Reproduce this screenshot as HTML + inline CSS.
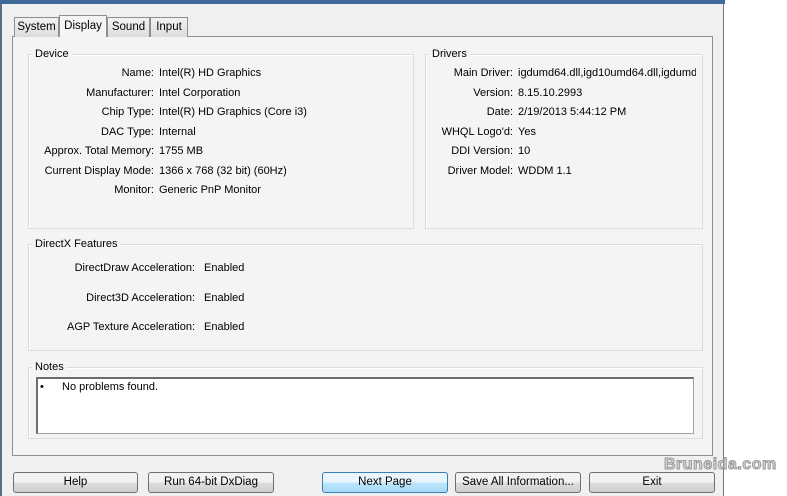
<!DOCTYPE html>
<html><head><style>
body{margin:0;width:787px;height:496px;background:#fff;position:relative;overflow:hidden;font-family:"Liberation Sans",sans-serif;font-size:11px;color:#000}
.a{position:absolute}
.win{left:0;top:0;width:724px;height:496px;background:#f0f0f0;border-left:2px solid #5a6e86;border-right:1px solid #6a7c92;box-sizing:border-box}
.top{left:0;top:0;width:725px;height:4px;background:#3f6a9a}
.panel{left:12px;top:36px;width:701px;height:420px;border:1px solid #8e8f8f;background:#f4f4f4;box-sizing:border-box}
.tab{top:17px;height:20px;border:1px solid #8e8f8f;border-bottom:none;background:linear-gradient(#f2f2f2,#dcdcdc);box-sizing:border-box;text-align:center;line-height:19px;font-size:11.5px}
.tab.sel{top:15px;height:22px;background:#f4f4f4;line-height:20px}
.grp{border:1px solid #dcdcdc;box-shadow:inset 1px 1px 0 #fff;box-sizing:border-box;background:#f4f4f4}
.lg{background:#f4f4f4;padding:0 3px}
.r{text-align:right;width:250px}
.btn{top:472px;height:21px;border:1px solid #707070;border-radius:3px;background:linear-gradient(#f2f2f2 50%,#dddddd 50%,#cfcfcf);box-sizing:border-box;text-align:center;line-height:19px;font-size:11.5px}
</style></head><body>
<div class="a win"></div>
<div class="a top"></div>
<div class="a panel"></div>
<div class="a tab" style="left:14px;width:45px">System</div>
<div class="a tab" style="left:107px;width:43px">Sound</div>
<div class="a tab" style="left:150px;width:38px">Input</div>
<div class="a tab sel" style="left:59px;width:48px">Display</div>

<div class="a grp" style="left:28px;top:54px;width:386px;height:175px"></div>
<div class="a lg" style="left:32px;top:48px">Device</div>
<div class="a grp" style="left:425px;top:54px;width:278px;height:175px"></div>
<div class="a lg" style="left:429px;top:48px">Drivers</div>
<div class="a grp" style="left:28px;top:244px;width:675px;height:107px"></div>
<div class="a lg" style="left:32px;top:238px">DirectX Features</div>
<div class="a grp" style="left:28px;top:367px;width:675px;height:72px"></div>
<div class="a lg" style="left:32px;top:361px">Notes</div>
<div class="a" style="left:36px;top:377px;width:658px;height:57px;background:#fff;border:1px solid #a0a0a0;border-top:2px solid #6d6d6d;border-left:2px solid #6d6d6d;box-sizing:border-box"></div>
<div class="a" style="left:40px;top:381px">•</div>
<div class="a" style="left:62px;top:381px">No problems found.</div>

<div class="a r" style="left:-96px;top:67px">Name:</div><div class="a" style="left:159px;top:67px">Intel(R) HD Graphics</div>
<div class="a r" style="left:-96px;top:87px">Manufacturer:</div><div class="a" style="left:159px;top:87px">Intel Corporation</div>
<div class="a r" style="left:-96px;top:106px">Chip Type:</div><div class="a" style="left:159px;top:106px">Intel(R) HD Graphics (Core i3)</div>
<div class="a r" style="left:-96px;top:126px">DAC Type:</div><div class="a" style="left:159px;top:126px">Internal</div>
<div class="a r" style="left:-96px;top:145px">Approx. Total Memory:</div><div class="a" style="left:159px;top:145px">1755 MB</div>
<div class="a r" style="left:-96px;top:165px">Current Display Mode:</div><div class="a" style="left:159px;top:165px">1366 x 768 (32 bit) (60Hz)</div>
<div class="a r" style="left:-96px;top:184px">Monitor:</div><div class="a" style="left:159px;top:184px">Generic PnP Monitor</div>

<div class="a r" style="left:263px;top:67px">Main Driver:</div><div class="a" style="left:518px;top:67px;width:178px;overflow:hidden;white-space:nowrap">igdumd64.dll,igd10umd64.dll,igdumdx</div>
<div class="a r" style="left:263px;top:87px">Version:</div><div class="a" style="left:518px;top:87px">8.15.10.2993</div>
<div class="a r" style="left:263px;top:106px">Date:</div><div class="a" style="left:518px;top:106px">2/19/2013 5:44:12 PM</div>
<div class="a r" style="left:263px;top:126px">WHQL Logo'd:</div><div class="a" style="left:518px;top:126px">Yes</div>
<div class="a r" style="left:263px;top:145px">DDI Version:</div><div class="a" style="left:518px;top:145px">10</div>
<div class="a r" style="left:263px;top:165px">Driver Model:</div><div class="a" style="left:518px;top:165px">WDDM 1.1</div>

<div class="a r" style="left:-55px;top:262px">DirectDraw Acceleration:</div><div class="a" style="left:204px;top:262px">Enabled</div>
<div class="a r" style="left:-55px;top:292px">Direct3D Acceleration:</div><div class="a" style="left:204px;top:292px">Enabled</div>
<div class="a r" style="left:-55px;top:321px">AGP Texture Acceleration:</div><div class="a" style="left:204px;top:321px">Enabled</div>

<div class="a btn" style="left:13px;width:125px">Help</div>
<div class="a btn" style="left:148px;width:126px">Run 64-bit DxDiag</div>
<div class="a btn" style="left:322px;width:126px;border-color:#3c7fb1;background:linear-gradient(#eaf6fd 50%,#bee6fd 50%,#a7d9f5)">Next Page</div>
<div class="a btn" style="left:455px;width:126px">Save All Information...</div>
<div class="a btn" style="left:589px;width:126px">Exit</div>
<div class="a" style="left:664px;top:456px;font-size:16px;font-weight:bold;color:#d8d8d8;letter-spacing:0.5px;-webkit-text-stroke:1px #999">Bruneida.com</div>
</body></html>
